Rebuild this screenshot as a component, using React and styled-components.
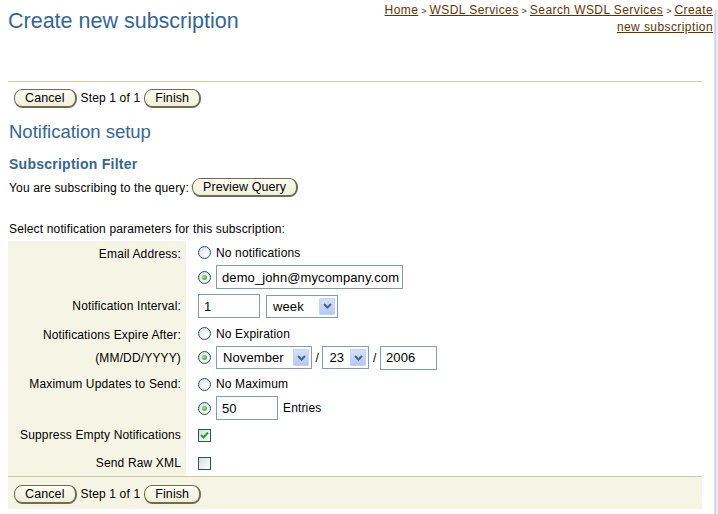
import React from 'react'
import styled, { createGlobalStyle } from 'styled-components'

const Global = createGlobalStyle`
  body {
    margin: 0;
    background: #fff;
    font-family: "Liberation Sans", Arial, sans-serif;
    font-size: 12px;
    letter-spacing: 0.15px;
    color: #000;
  }
`

const Page = styled.div`
  display: flex;
  width: 718px;
  height: 514px;
  overflow: hidden;
`

const Main = styled.div`
  width: 706px;
  padding-left: 8px;
`

const Scrollbar = styled.div`
  width: 3px;
  margin-left: 1px;
  background: #eeede5;
  border-left: 1px solid #d8dff0;
  box-shadow: inset 1px 0 0 #c3d3fd;
  margin-top: 10px;
`

const Header = styled.div`
  display: flex;
  justify-content: space-between;
  align-items: flex-start;
  height: 81px;
`

const Title = styled.h1`
  margin: 0;
  padding-top: 8px;
  font-size: 21.5px;
  font-weight: normal;
  letter-spacing: 0;
  color: #336699;
  line-height: 26px;
`

const Crumbs = styled.div`
  width: 344px;
  padding-top: 2px;
  text-align: right;
  line-height: 16px;
  font-size: 12px;
  letter-spacing: 0.42px;
  color: #663300;
`

const Crumb = styled.a`
  color: #663300;
  text-decoration: underline;
`

const Sep = styled.span`
  font-size: 9px;
  letter-spacing: 0;
  margin: 0 3px;
`

const Content = styled.div`
  width: 694px;
`

const Divider = styled.div`
  border-top: 1px solid #c9cc9f;
`

const ButtonBar = styled.div`
  display: flex;
  align-items: flex-start;
  gap: 4px;
  padding: ${p => (p.$footer ? '8px 0 0 6px' : '7px 0 0 6px')};
  height: ${p => (p.$footer ? '33px' : '24px')};
  background: ${p => (p.$footer ? '#f5f5e6' : 'transparent')};
  border-top: ${p => (p.$footer ? '1px solid #c9cc9f' : 'none')};
  box-sizing: border-box;
`

const StepText = styled.span`
  line-height: 14px;
  padding-top: 2px;
`

const Button = styled.button`
  font-family: "Liberation Sans", Arial, sans-serif;
  font-size: 12.5px;
  letter-spacing: 0.1px;
  color: #000;
  height: 19px;
  padding: 0 10px;
  line-height: 17px;
  border: 1px solid #6e6e4e;
  border-right-width: 2px;
  border-bottom-width: 2px;
  border-radius: 8px / 9px;
  background: linear-gradient(#fcfcf2, #f0f0dc);
  cursor: pointer;
`

const Heading = styled.h2`
  margin: 15px 0 0 1px;
  font-size: 18.5px;
  font-weight: normal;
  letter-spacing: 0;
  color: #336699;
  line-height: 22px;
`

const SubHeading = styled.h3`
  margin: 13px 0 0 1px;
  font-size: 14px;
  font-weight: bold;
  letter-spacing: 0.25px;
  color: #336699;
  line-height: 16px;
`

const QueryLine = styled.div`
  display: flex;
  align-items: center;
  gap: 3px;
  margin: 6px 0 0 1px;
`

const Note = styled.div`
  margin: 25px 0 0 1px;
  line-height: 14px;
`

const Form = styled.div`
  margin-top: 5px;
  display: grid;
  grid-template-columns: 178px 1fr;
`

const Label = styled.div`
  background: #f5f5e6;
  height: ${p => p.$h}px;
  display: flex;
  align-items: center;
  justify-content: flex-end;
  padding-right: 5px;
  padding-top: ${p => p.$shift || 0}px;
  box-sizing: border-box;
  white-space: nowrap;
`

const Control = styled.div`
  height: ${p => p.$h}px;
  display: flex;
  align-items: center;
  gap: ${p => p.$gap ?? 5}px;
  padding-left: 12px;
  padding-top: ${p => p.$shift || 0}px;
  box-sizing: border-box;
`

const Radio = styled.span`
  width: 13px;
  height: 13px;
  border-radius: 50%;
  border: 1px solid #1c5180;
  box-sizing: border-box;
  background: radial-gradient(circle at 65% 65%, #fff 0%, #eeece5 50%, #d9d5c8 100%);
  display: inline-flex;
  align-items: center;
  justify-content: center;
  flex: none;
  &::after {
    content: '';
    width: 5px;
    height: 5px;
    border-radius: 50%;
    background: ${p => (p.$checked ? 'radial-gradient(circle at 40% 40%, #8ee68e, #21a121)' : 'transparent')};
  }
`

const Check = styled.span`
  width: 13px;
  height: 13px;
  border: 1px solid #1c5180;
  box-sizing: border-box;
  background: linear-gradient(135deg, #dcdcd5, #fff);
  display: inline-flex;
  align-items: center;
  justify-content: center;
  flex: none;
`

const TextBox = styled.div`
  width: ${p => p.$w}px;
  height: 24px;
  border: 1px solid #7f9db9;
  box-sizing: border-box;
  display: flex;
  align-items: center;
  padding-left: 5px;
  font-size: 13px;
  letter-spacing: 0.1px;
  background: #fff;
  flex: none;
`

const Select = styled.div`
  width: ${p => p.$w}px;
  height: 23px;
  border: 1px solid #7f9db9;
  box-sizing: border-box;
  display: flex;
  align-items: center;
  justify-content: space-between;
  padding: 0 2px 0 6px;
  font-size: 13px;
  letter-spacing: 0.1px;
  background: #fff;
  flex: none;
`

const Arrow = styled.span`
  width: 16px;
  height: 17px;
  box-sizing: border-box;
  border: 1px solid #c3d3fd;
  border-radius: 1px;
  background: linear-gradient(#d5e0fb, #b4c8f6);
  display: flex;
  align-items: center;
  justify-content: center;
`

const Slash = styled.span`
  margin: 0 -1.5px;
`

const ChevronDown = () => (
  <svg width="9" height="6" viewBox="0 0 9 6">
    <path d="M1 1 L4.5 4.5 L8 1" fill="none" stroke="#4d6185" strokeWidth="2" />
  </svg>
)

const Tick = () => (
  <svg width="9" height="8" viewBox="0 0 9 8">
    <path d="M1 4 L3.5 6.5 L8 1.5" fill="none" stroke="#21a121" strokeWidth="2" />
  </svg>
)

const Dropdown = ({ w, value }) => (
  <Select $w={w}>
    <span>{value}</span>
    <Arrow><ChevronDown /></Arrow>
  </Select>
)

const Buttons = ({ footer }) => (
  <ButtonBar $footer={footer}>
    <Button>Cancel</Button>
    <StepText>Step 1 of 1</StepText>
    <Button>Finish</Button>
  </ButtonBar>
)

export default function App() {
  return (
    <Page>
      <Global />
      <Main>
        <Header>
          <Title>Create new subscription</Title>
          <Crumbs>
            <Crumb>Home</Crumb><Sep>&gt;</Sep>
            <Crumb>WSDL Services</Crumb><Sep>&gt;</Sep>
            <Crumb>Search WSDL Services</Crumb><Sep>&gt;</Sep>
            <Crumb>Create</Crumb><br />
            <Crumb>new subscription</Crumb>
          </Crumbs>
        </Header>
        <Content>
          <Divider />
          <Buttons />
          <Heading>Notification setup</Heading>
          <SubHeading>Subscription Filter</SubHeading>
          <QueryLine>
            <span>You are subscribing to the query:</span>
            <Button>Preview Query</Button>
          </QueryLine>
          <Note>Select notification parameters for this subscription:</Note>
          <Form>
            <Label $h={23} $shift={3}>Email Address:</Label>
            <Control $h={23}><Radio />No notifications</Control>

            <Label $h={26} />
            <Control $h={26}><Radio $checked /><TextBox $w={187}>demo_john@mycompany.com</TextBox></Control>

            <Label $h={32}>Notification Interval:</Label>
            <Control $h={32} $gap={6}>
              <TextBox $w={62}>1</TextBox>
              <Dropdown w={72} value="week" />
            </Control>

            <Label $h={23} $shift={3}>Notifications Expire After:</Label>
            <Control $h={23}><Radio />No Expiration</Control>

            <Label $h={25}>(MM/DD/YYYY)</Label>
            <Control $h={25}>
              <Radio $checked />
              <Dropdown w={96} value="November" />
              <Slash>/</Slash>
              <Dropdown w={47} value="23" />
              <Slash>/</Slash>
              <TextBox $w={57}>2006</TextBox>
            </Control>

            <Label $h={26} $shift={2}>Maximum Updates to Send:</Label>
            <Control $h={26} $shift={2}><Radio />No Maximum</Control>

            <Label $h={24} />
            <Control $h={24}>
              <Radio $checked />
              <TextBox $w={62}>50</TextBox>
              <span>Entries</span>
            </Control>

            <Label $h={30}>Suppress Empty Notifications</Label>
            <Control $h={30}><Check><Tick /></Check></Control>

            <Label $h={26}>Send Raw XML</Label>
            <Control $h={26}><Check /></Control>
          </Form>
          <Buttons footer />
        </Content>
      </Main>
      <Scrollbar />
    </Page>
  )
}
